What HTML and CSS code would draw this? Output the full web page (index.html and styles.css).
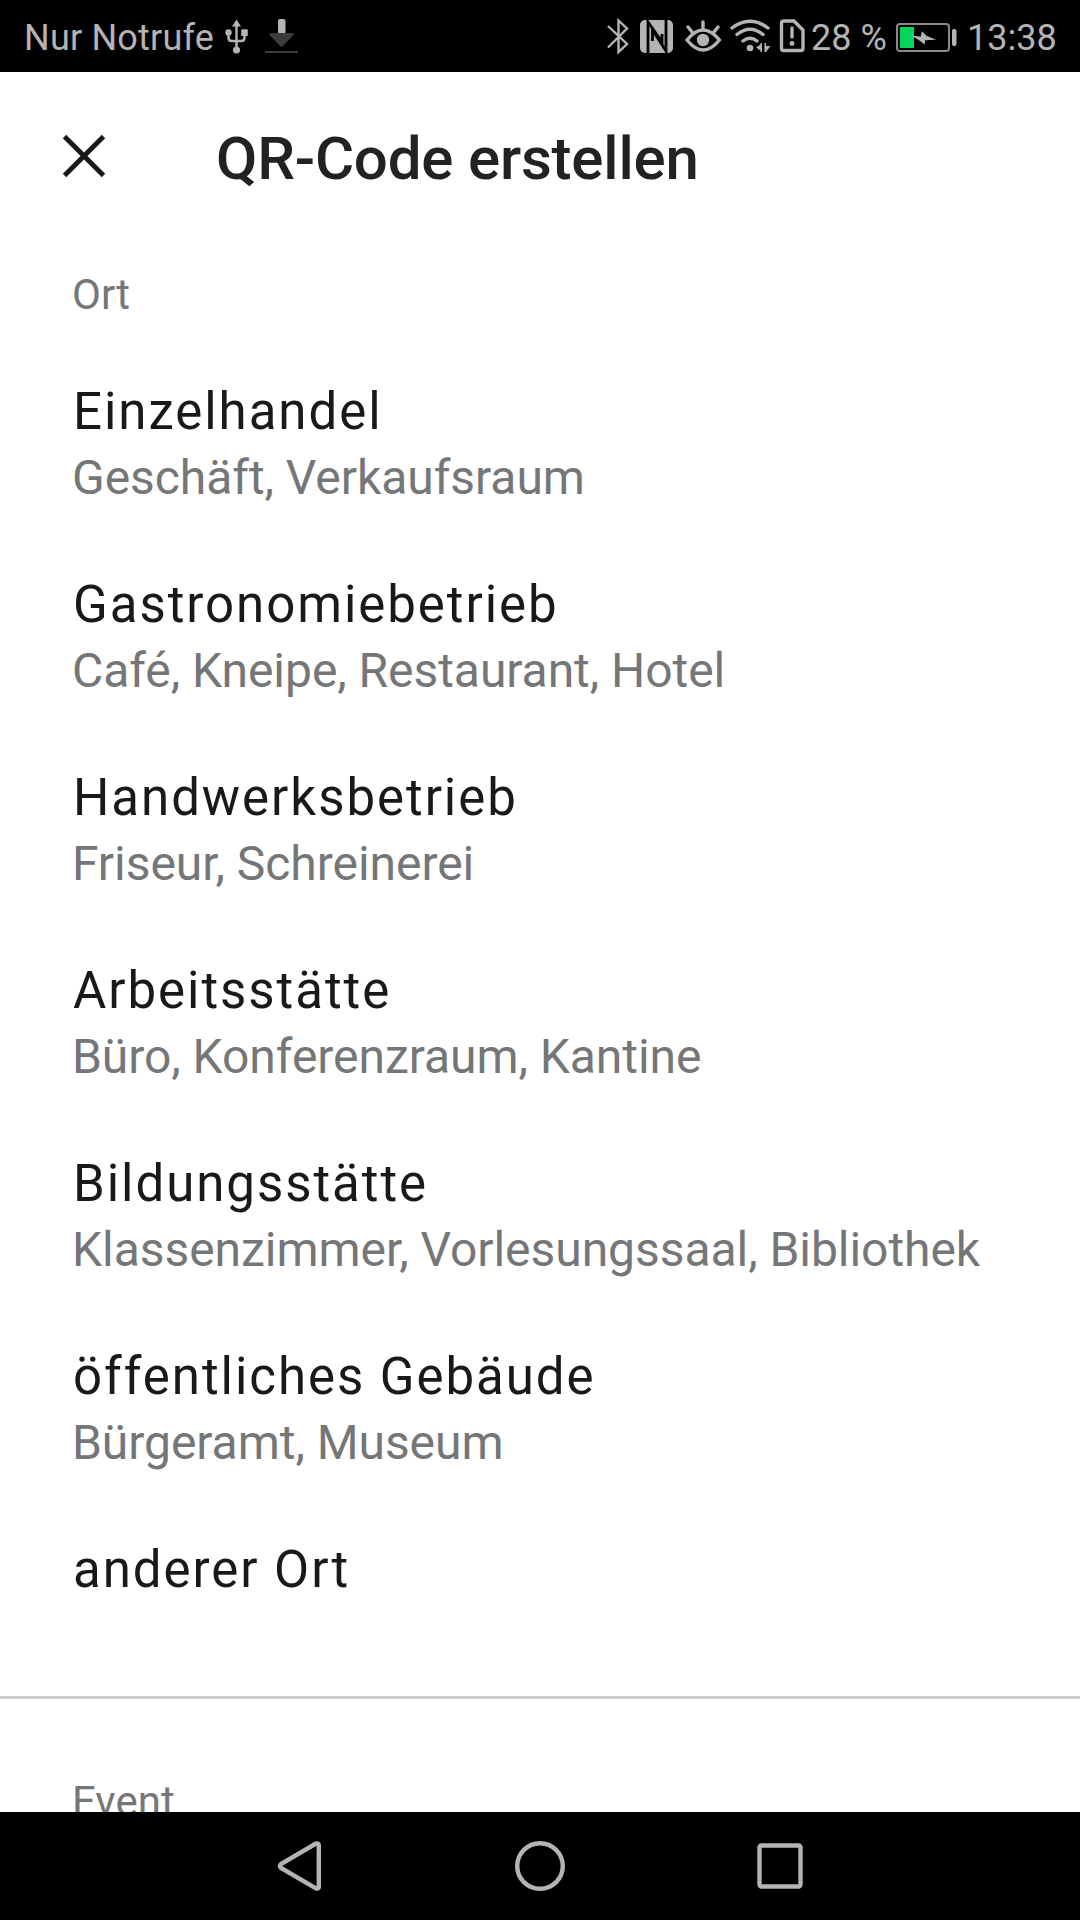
FILE: index.html
```html
<!DOCTYPE html>
<html lang="de">
<head>
<meta charset="utf-8">
<title>QR-Code erstellen</title>
<link rel="stylesheet" href="styles.css">
</head>
<body>
<div class="status">
  <span class="carrier">Nur Notrufe</span>
  <svg class="usb" width="28" height="72" viewBox="222 0 28 72"><path class="line" d="M236.500 24V50M228.500 33V38Q228.500 41 232 41H241Q244.500 41 244.500 38V33"/><path d="M236.500 19.500L241 26.500H232Z"/><circle cx="228.500" cy="32.500" r="3.200"/><rect x="241.200" y="29.200" width="6.600" height="6.800" rx="1"/><circle cx="236.500" cy="50" r="3.500"/></svg>
  <svg class="download" width="34" height="72" viewBox="265 0 34 72"><rect x="278" y="19" width="7.500" height="15" rx="2"/><path class="dim" d="M270 33H293.500V35L282.500 46.500Q281.500 47.200 280.500 46.500L269.500 35Z"/><rect class="dim" x="265" y="51" width="33" height="2"/></svg>
  <span class="spacer"></span>
  <svg width="24" height="72" viewBox="606 0 24 72"><path class="line" d="M608 26L627 44L618.500 52V20.500L627 28.500L608 47.500"/></svg>
  <svg class="nfc" width="34" height="72" viewBox="640 0 34 72"><rect x="640" y="20" width="33" height="33" rx="5"/><path class="cut" d="M648 53V22L662 42V34M666 20V51L652.500 30V41"/></svg>
  <svg class="eye" width="36" height="72" viewBox="685 0 36 72"><path class="thick" d="M687 40Q703 20 719.500 40Q703 60 687 40ZM703 22V30M688 27L692 32M718 27L714 32"/><circle cx="703" cy="40" r="6.200"/></svg>
  <svg class="wifi" width="42" height="72" viewBox="730 0 42 72"><path class="thick" d="M732 28Q750 14.500 768 28M737 34.500Q750 24 763 34.500M743 41Q750 35.500 757 41"/><circle cx="750" cy="48" r="3.300"/><path d="M762 43V52H760.500V50.500L756 47.500L760.500 44.500V43ZM764.500 43H766V46H770.500L766 52H764.500Z"/></svg>
  <svg class="sim" width="26" height="72" viewBox="779 0 26 72"><path class="thick" d="M784 21H794L803 30V48.500Q803 50.500 801 50.500H784Q781.500 50.500 781.500 48.500V23Q781.500 21 784 21ZM792 28V37"/><circle cx="792" cy="43.500" r="2.400"/></svg>
  <span class="percent">28 %</span>
  <svg class="battery" width="62" height="72" viewBox="896 0 62 72"><rect class="case" x="897" y="24" width="52" height="27" rx="3"/><rect class="charge" x="900" y="27" width="14" height="21"/><path d="M911 35.300L920.700 36.700L921.700 31.300L927 36L936 39.700L925 40.300L924.700 44.500L918 39.500Z"/><rect x="952" y="29" width="4.500" height="17" rx="2"/></svg>
  <span class="clock">13:38</span>
</div>
<main class="screen">
  <header class="appbar">
    <svg class="close" width="44" height="44" viewBox="0 0 44 44"><path d="M2.500 2.500L41.500 41.500M41.500 2.500L2.500 41.500"/></svg>
    <h1>QR-Code erstellen</h1>
  </header>
  <section class="group">
    <h2>Ort</h2>
    <ul class="list">
      <li><h3>Einzelhandel</h3><p>Geschäft, Verkaufsraum</p></li>
      <li><h3>Gastronomiebetrieb</h3><p>Café, Kneipe, Restaurant, Hotel</p></li>
      <li><h3>Handwerksbetrieb</h3><p>Friseur, Schreinerei</p></li>
      <li><h3>Arbeitsstätte</h3><p>Büro, Konferenzraum, Kantine</p></li>
      <li><h3>Bildungsstätte</h3><p>Klassenzimmer, Vorlesungssaal, Bibliothek</p></li>
      <li><h3>öffentliches Gebäude</h3><p>Bürgeramt, Museum</p></li>
      <li><h3>anderer Ort</h3></li>
    </ul>
  </section>
  <section class="group next">
    <h2>Event</h2>
  </section>
</main>
<nav class="navbar">
  <svg width="48" height="54" viewBox="276 1839 48 54"><path d="M316 1843.500L281 1864Q279 1866 281 1868L316 1888.500Q318.800 1889 318.800 1887V1845Q318.800 1843 316 1843.500Z"/></svg>
  <svg width="54" height="54" viewBox="513 1839 54 54"><circle cx="540" cy="1866" r="22.800"/></svg>
  <svg width="48" height="54" viewBox="756 1839 48 54"><rect x="759.500" y="1845.500" width="41" height="41" rx="2"/></svg>
</nav>
</body>
</html>
```
FILE: styles.css
```css
body {
  margin: 0;
  width: 1080px;
  height: 1920px;
  display: flex;
  flex-direction: column;
  overflow: hidden;
  background: #fff;
  font-family: Roboto, sans-serif;
}
h1, h2, h3, p, ul { margin: 0; padding: 0; font-weight: 400; }
svg { display: block; flex: none; }

.status {
  flex: none;
  display: flex;
  height: 72px;
  box-sizing: border-box;
  padding: 0 24px;
  background: #000;
  color: #b4b4b4;
  fill: #b4b4b4;
  font-size: 36px;
  line-height: 77px;
  white-space: nowrap;
}
.carrier { width: 198px; letter-spacing: 0.2px; }
.download { margin-left: 15px; }
.spacer { flex: 1; }
.line { fill: none; stroke: #b4b4b4; stroke-width: 2.4; }
.thick { fill: none; stroke: #b4b4b4; stroke-width: 3.4; stroke-linecap: round; }
.dim { fill: #3c3c3c; }
.nfc { margin-left: 10px; }
.cut { fill: none; stroke: #000; stroke-width: 2.8; }
.eye { margin-left: 11px; }
.wifi { margin-left: 9px; }
.sim { margin-left: 7px; }
.percent { margin-left: 6px; width: 85px; }
.case { fill: none; stroke: #8a8a8a; stroke-width: 2; }
.charge { fill: #04d65c; }
.clock { width: 89px; margin-left: 9px; }

.screen { flex: 1; min-height: 0; overflow: hidden; }
.appbar {
  display: flex;
  align-items: center;
  height: 173px;
  padding-left: 62px;
}
.close { margin-top: -5px; fill: none; stroke: #17191a; stroke-width: 4.8; }
h1 {
  margin-left: 110px;
  color: #212322;
  font-size: 60px;
  line-height: 60px;
  font-weight: 500;
  letter-spacing: -0.2px;
}
.group { padding: 26px 72px 93px; }
h2 { color: #757677; font-size: 42px; line-height: 48px; }
.list {
  display: flex;
  flex-direction: column;
  gap: 61px;
  margin-top: 60px;
  list-style: none;
}
h3 { padding-left: 1px; color: #17191a; font-size: 51px; line-height: 66px; letter-spacing: 1.95px; }
p { color: #757677; font-size: 48px; line-height: 66px; letter-spacing: -0.05px; white-space: nowrap; }
.next { padding-top: 79px; border-top: 3px solid #ccc; }

.navbar {
  flex: none;
  display: flex;
  justify-content: center;
  align-items: center;
  gap: 189px;
  height: 108px;
  background: #000;
  fill: none;
  stroke: #b4b4b4;
  stroke-width: 4.4;
}
```
